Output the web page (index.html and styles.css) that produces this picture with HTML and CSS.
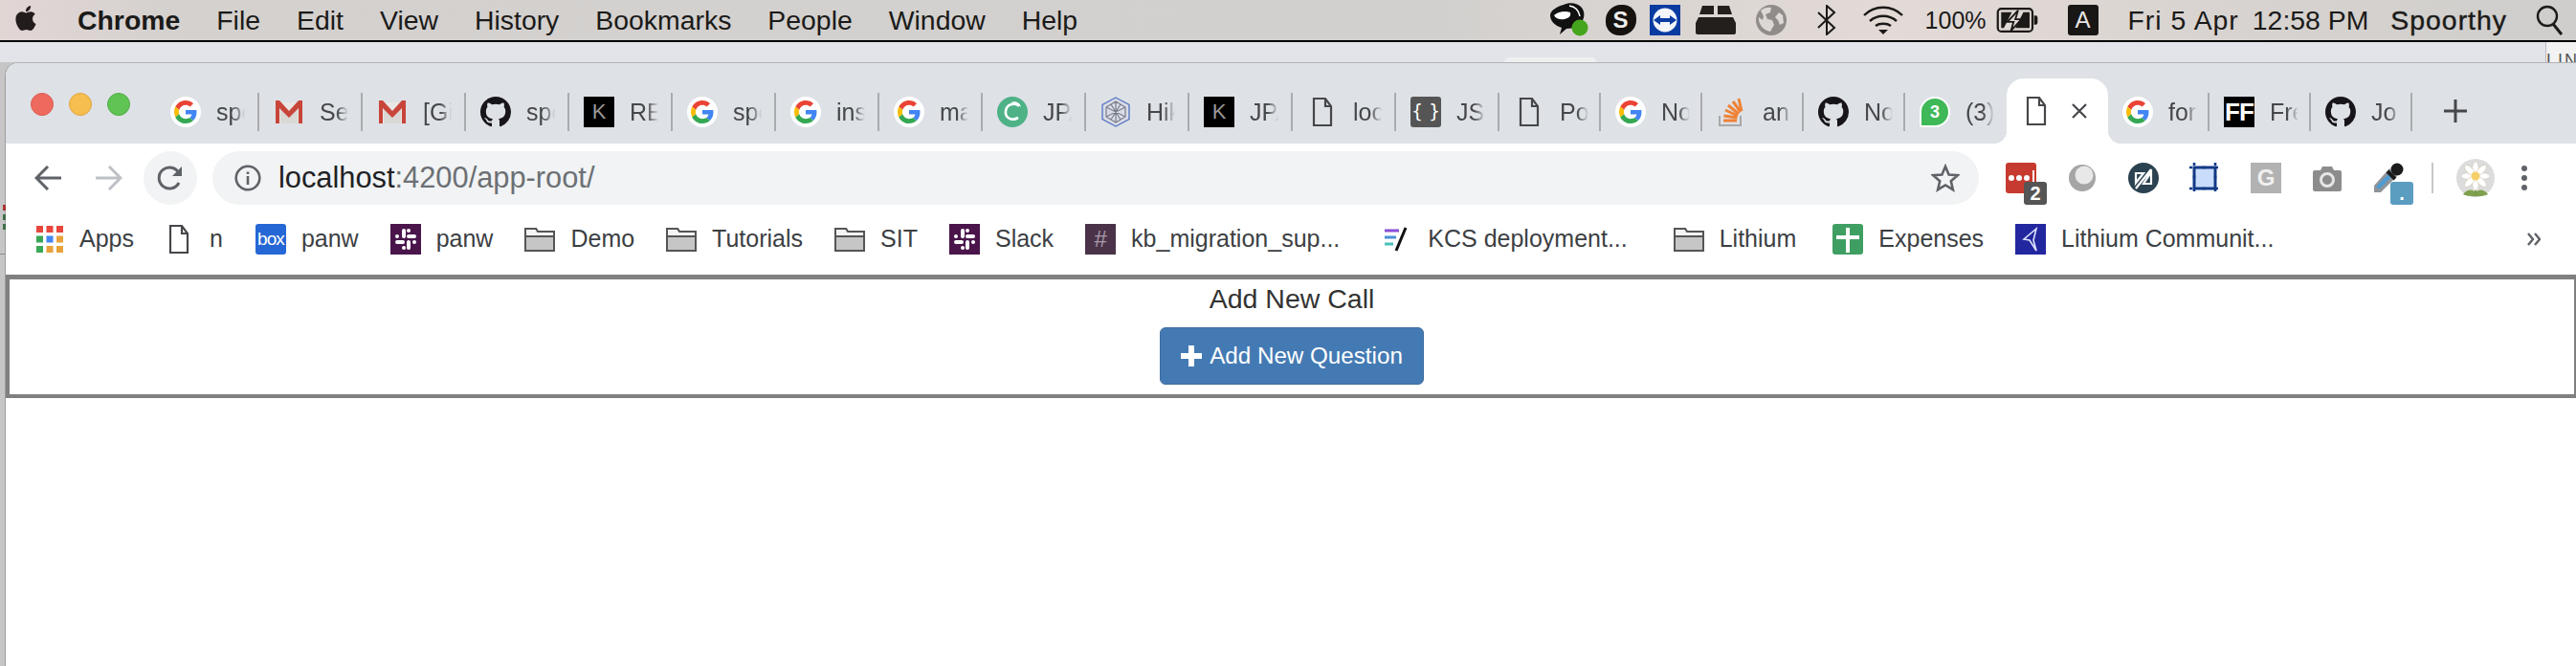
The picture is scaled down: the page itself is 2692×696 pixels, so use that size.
FILE: index.html
```html
<!DOCTYPE html>
<html>
<head lang="en">
    <meta charset="UTF-8">
    <title>Add New Call</title>
    <link rel="stylesheet" href="styles.css">
</head>
<body>
<svg class="defs" width="0" height="0">
    <symbol id="i-google" viewBox="-8 -8 64 64">
        <circle cx="24" cy="24" r="32" fill="#fff"/>
        <path fill="#EA4335" d="M24 9.5c3.54 0 6.71 1.22 9.21 3.6l6.85-6.85C35.9 2.38 30.47 0 24 0 14.62 0 6.51 5.38 2.56 13.22l7.98 6.19C12.43 13.72 17.74 9.5 24 9.5z"/>
        <path fill="#4285F4" d="M46.98 24.55c0-1.57-.15-3.09-.38-4.55H24v9.02h12.94c-.58 2.96-2.26 5.48-4.78 7.18l7.73 6c4.51-4.18 7.09-10.36 7.09-17.65z"/>
        <path fill="#FBBC05" d="M10.53 28.59c-.48-1.45-.76-2.99-.76-4.59s.27-3.14.76-4.59l-7.98-6.19C.92 16.46 0 20.12 0 24c0 3.88.92 7.54 2.56 10.78l7.97-6.19z"/>
        <path fill="#34A853" d="M24 48c6.48 0 11.93-2.13 15.89-5.81l-7.73-6c-2.15 1.45-4.92 2.3-8.16 2.3-6.26 0-11.57-4.22-13.47-9.91l-7.98 6.19C6.51 42.62 14.62 48 24 48z"/>
    </symbol>
    <symbol id="i-gmail" viewBox="0 0 32 32">
        <path fill="#e9e7e4" d="M3 6h26v22H3z"/>
        <path fill="#dad8d5" d="M7 9l9 9 9-9v19H7z"/>
        <path fill="#c8453a" d="M2 4h4l10 11L26 4h4v24h-4V12l-10 10L6 12v16H2z"/>
    </symbol>
    <symbol id="i-github" viewBox="0 0 16 16">
        <path fill="#17151a" d="M8 0C3.58 0 0 3.58 0 8c0 3.54 2.29 6.53 5.47 7.59.4.07.55-.17.55-.38 0-.19-.01-.82-.01-1.49-2.01.37-2.53-.49-2.69-.94-.09-.23-.48-.94-.82-1.13-.28-.15-.68-.52-.01-.53.63-.01 1.08.58 1.23.82.72 1.21 1.87.87 2.33.66.07-.52.28-.87.51-1.07-1.78-.2-3.64-.89-3.64-3.95 0-.87.31-1.59.82-2.15-.08-.2-.36-1.02.08-2.12 0 0 .67-.21 2.2.82.64-.18 1.32-.27 2-.27.68 0 1.36.09 2 .27 1.53-1.04 2.2-.82 2.2-.82.44 1.1.16 1.92.08 2.12.51.56.82 1.27.82 2.15 0 3.07-1.87 3.75-3.65 3.95.29.25.54.73.54 1.48 0 1.07-.01 1.93-.01 2.2 0 .21.15.46.55.38A8.013 8.013 0 0016 8c0-4.42-3.58-8-8-8z"/>
    </symbol>
    <symbol id="i-doc" viewBox="0 0 32 32">
        <path fill="none" stroke="#45474a" stroke-width="2.2" d="M7 2h12l6 8v20H7zM19 2v8h6"/>
    </symbol>
    <symbol id="i-folder" viewBox="0 0 32 32">
        <path fill="#c6c6c6" stroke="#555" stroke-width="2" d="M1 28V5h11l2 3h17v20z"/>
        <path fill="#f4f4f4" stroke="#555" stroke-width="2" d="M1 5h11l2 3h17v5H1z"/>
    </symbol>
    <symbol id="i-slack" viewBox="0 0 32 32">
        <path fill="#4a154b" d="M0 0h32v32H0z"/>
        <g fill="#fff">
            <rect x="12" y="5" width="4" height="10" rx="2"/>
            <rect x="17" y="17" width="4" height="10" rx="2"/>
            <rect x="5" y="17" width="10" height="4" rx="2"/>
            <rect x="17" y="11" width="10" height="4" rx="2"/>
            <circle cx="19" cy="7" r="2"/>
            <circle cx="14" cy="25" r="2"/>
            <circle cx="7" cy="13" r="2"/>
            <circle cx="25" cy="19" r="2"/>
        </g>
    </symbol>
</svg>

<header class="menubar">
    <svg class="apple" viewBox="2 1 20 22"><path fill="#231c1c" d="M18.71 19.5c-.83 1.24-1.71 2.45-3.05 2.47-1.34.03-1.77-.79-3.29-.79-1.53 0-2 .77-3.27.82-1.31.05-2.3-1.32-3.14-2.53C4.25 17 2.94 12.45 4.7 9.39c.87-1.52 2.43-2.48 4.12-2.51 1.28-.02 2.5.87 3.29.87.78 0 2.26-1.07 3.81-.91.65.03 2.47.26 3.64 1.98-.09.06-2.17 1.28-2.15 3.81.03 3.02 2.65 4.03 2.68 4.04-.03.07-.42 1.44-1.38 2.83M13 3.5c.73-.83 1.94-1.46 2.94-1.5.13 1.17-.34 2.35-1.04 3.19-.69.85-1.83 1.51-2.95 1.42-.15-1.15.41-2.35 1.05-3.11z"/></svg>
    <nav class="menu">
        <b>Chrome</b>
        <span>File</span>
        <span>Edit</span>
        <span>View</span>
        <span>History</span>
        <span>Bookmarks</span>
        <span>People</span>
        <span>Window</span>
        <span>Help</span>
    </nav>
    <div class="status">
        <svg class="st-chat" viewBox="0 0 40 36">
            <path fill="#111" d="M14 2c6-3 15-2 19 3 3 4 3 9 1 13-3 6-10 9-17 9l-7 6 2-7C5 24 0 19 0 13 0 8 7 4 14 2z"/>
            <path fill="#fff" d="M4 13c4-4 12-5 17-3 1 4-2 6-6 7-4 1-9 0-11-4z"/>
            <path fill="none" stroke="#fff" stroke-width="1.500" d="M20 3c6 1 10 5 11 11"/>
            <circle cx="31" cy="26" r="8.500" fill="#45a51c"/>
        </svg>
        <span class="st-skype">S</span>
        <svg class="st-tv" viewBox="0 0 32 32">
            <path fill="#0a3ba1" d="M0 0h32v32H0z"/>
            <circle cx="16" cy="16" r="12.5" fill="#f3f5fa"/>
            <path fill="#0a3ba1" d="M4 16l7-5v3h10v-3l7 5-7 5v-3H11v3z"/>
        </svg>
        <svg class="st-drive" viewBox="0 0 42 30">
            <path fill="#231f1c" d="M7 0h12v9H4zM23 0h12l3 9H23zM3 12h36l3 6v10a2 2 0 0 1-2 2H2a2 2 0 0 1-2-2V18z"/>
        </svg>
        <svg class="st-globe" viewBox="0 0 32 32">
            <circle cx="16" cy="16" r="16" fill="#8f8c8a"/>
            <path fill="#dcd8d5" d="M5 6c3-3 8-4 11-3l-1 5-5 2 2 5 5 1 2 5-4 7C8 27 2 20 3 13l4 3 1-4zM24 8l4 3 1 8-4 2-2-5-3-3z"/>
        </svg>
        <svg class="st-bt" viewBox="0 0 20 32"><path fill="none" stroke="#1c1a18" stroke-width="2" d="M1 8l17 16-8 7V1l8 7L1 24"/></svg>
        <svg class="st-wifi" viewBox="0 0 42 30">
            <path fill="none" stroke="#1c1a18" stroke-width="2.4" d="M1 10c11-11 29-11 40 0M7 16c8-7 20-7 28 0M13 21c4-3 12-3 16 0"/>
            <path fill="#1c1a18" d="M16 25h10l-5 5z"/>
        </svg>
        <span class="st-pct">100%</span>
        <svg class="st-batt" viewBox="0 0 46 28">
            <rect x="1.2" y="1.2" width="39" height="25.6" rx="4" fill="none" stroke="#1c1a18" stroke-width="2.4"/>
            <path fill="#1c1a18" d="M42 9h2a2 2 0 0 1 2 2v6a2 2 0 0 1-2 2h-2zM5 5h12l-9 18H5zM30 5h7v18H21z"/>
            <path fill="none" stroke="#1c1a18" stroke-width="2" d="M24 3l-3 10h7L16 26l3-10h-7z"/>
        </svg>
        <span class="st-key">A</span>
        <span class="st-date">Fri 5 Apr</span>
        <span class="st-time">12:58 PM</span>
        <span class="st-user">Spoorthy</span>
        <svg class="st-search" viewBox="0 0 30 32"><circle cx="12" cy="12" r="10" fill="none" stroke="#1c1a18" stroke-width="2.4"/><path stroke="#1c1a18" stroke-width="3" d="M18 20l9 11"/></svg>
    </div>
</header>

<div class="desk">
    <div class="back-tab"></div>
    <div class="back-corner"><span>LIN</span></div>
    <div class="wall-line"></div>
    <div class="wall-mark red"></div>
    <div class="wall-mark green one"></div>
    <div class="wall-mark green two"></div>

    <div class="window">
        <div class="tabstrip">
            <div class="lights"><i class="red"></i><i class="yellow"></i><i class="green"></i></div>
            <div class="tab"><svg class="fav"><use href="#i-google"/></svg><span class="label">spo</span></div>
            <div class="tab"><svg class="fav"><use href="#i-gmail"/></svg><span class="label">Se</span></div>
            <div class="tab"><svg class="fav"><use href="#i-gmail"/></svg><span class="label">[Gi</span></div>
            <div class="tab"><svg class="fav"><use href="#i-github"/></svg><span class="label">spo</span></div>
            <div class="tab"><span class="fav fav-k">K</span><span class="label">RE</span></div>
            <div class="tab"><svg class="fav"><use href="#i-google"/></svg><span class="label">spo</span></div>
            <div class="tab"><svg class="fav"><use href="#i-google"/></svg><span class="label">ins</span></div>
            <div class="tab"><svg class="fav"><use href="#i-google"/></svg><span class="label">ma</span></div>
            <div class="tab">
                <svg class="fav" viewBox="0 0 32 32">
                    <circle cx="16" cy="16" r="16" fill="#4fb287"/>
                    <path fill="none" stroke="#fff" stroke-width="2.6" d="M23 10c-3-4-13-3-14 5-1 7 6 11 13 7"/>
                    <path fill="#fff" d="M14 6c5-2 10 0 11 5-3-3-7-4-11-5z"/>
                </svg>
                <span class="label">JPA</span>
            </div>
            <div class="tab">
                <svg class="fav" viewBox="0 0 32 32">
                    <path fill="#d9dce6" stroke="#5a78c4" stroke-width="1.4" d="M16 1l14 7.500v15L16 31 2 23.500v-15z"/>
                    <path fill="none" stroke="#7a7f8c" stroke-width="1.2" d="M16 5l10 6v10l-10 6-10-6V11zM6 11l20 10M26 11L6 21M16 5v22M11 8l10 16M21 8L11 24"/>
                </svg>
                <span class="label">Hik</span>
            </div>
            <div class="tab"><span class="fav fav-k">K</span><span class="label">JPA</span></div>
            <div class="tab"><svg class="fav"><use href="#i-doc"/></svg><span class="label">loc</span></div>
            <div class="tab"><span class="fav fav-json">{ }</span><span class="label">JS</span></div>
            <div class="tab tab-sm"><svg class="fav"><use href="#i-doc"/></svg><span class="label">Po</span></div>
            <div class="tab tab-sm"><svg class="fav"><use href="#i-google"/></svg><span class="label">No</span></div>
            <div class="tab tab-sm">
                <svg class="fav" viewBox="0 0 32 32">
                    <path fill="none" stroke="#a8a8a8" stroke-width="2" d="M3 20v10h22V20"/>
                    <path fill="none" stroke="#ef8236" stroke-width="3" d="M7 25h14M7.500 20l14 2M9 14l13 6M12 9l11 9M17 5l8 11M23 2l3 13"/>
                </svg>
                <span class="label">an</span>
            </div>
            <div class="tab tab-sm"><svg class="fav"><use href="#i-github"/></svg><span class="label">No</span></div>
            <div class="tab tab-sm tab-before-active">
                <span class="fav fav-wa">3</span><span class="label">(3)</span>
            </div>
            <div class="tab tab-sm tab-active">
                <svg class="fav"><use href="#i-doc"/></svg>
                <svg class="close" viewBox="0 0 18 18"><path stroke="#45474a" stroke-width="2.2" d="M2 2l14 14M16 2L2 16"/></svg>
            </div>
            <div class="tab tab-sm"><svg class="fav"><use href="#i-google"/></svg><span class="label">for</span></div>
            <div class="tab tab-sm"><span class="fav fav-ff">FF</span><span class="label">Fre</span></div>
            <div class="tab tab-sm"><svg class="fav"><use href="#i-github"/></svg><span class="label">Jo</span></div>
            <svg class="newtab" viewBox="0 0 24 24"><path fill="#45474a" d="M10.500 0h3v10.500H24v3H13.500V24h-3V13.500H0v-3h10.500z"/></svg>
        </div>

        <div class="toolbar">
            <svg class="nav-arrow" viewBox="0 0 28 26"><path fill="none" stroke="#5f6368" stroke-width="3" d="M28 13H3M14 1L2 13l12 12"/></svg>
            <svg class="nav-arrow off" viewBox="0 0 28 26"><path fill="none" stroke="#bdc1c6" stroke-width="3" d="M0 13h25M14 1l12 12-12 12"/></svg>
            <div class="reload">
                <svg viewBox="0 0 28 28"><path fill="none" stroke="#5f6368" stroke-width="3" d="M23 19a11 11 0 1 1 0-10"/><path fill="#5f6368" d="M26 2v10H16z"/></svg>
            </div>
            <div class="omnibox">
                <svg class="info" viewBox="0 0 28 28"><circle cx="14" cy="14" r="12.300" fill="none" stroke="#5f6368" stroke-width="2.600"/><path fill="#5f6368" d="M12.700 12h2.600v9h-2.600zM12.700 7.500h2.600v2.600h-2.600z"/></svg>
                <span class="url"><em>localhost</em>:4200/app-root/</span>
                <svg class="star" viewBox="0 0 30 30"><path fill="none" stroke="#5f6368" stroke-width="2.600" d="M15 3l3.600 8.500 9.200.7-7 6 2.100 9L15 22.400 7.100 27.200l2.100-9-7-6 9.200-.7z"/></svg>
            </div>
            <div class="extensions">
                <div class="ext">
                    <svg viewBox="0 0 32 32"><rect width="32" height="32" rx="3" fill="#c73a2f"/><circle cx="6" cy="16" r="3" fill="#fff"/><circle cx="14" cy="16" r="3" fill="#fff"/><circle cx="22" cy="16" r="3" fill="#fff"/><path fill="#fff" d="M28 8h2v16h-2z"/></svg>
                    <span class="ext-badge dark">2</span>
                </div>
                <div class="ext">
                    <svg viewBox="0 0 32 32"><circle cx="16" cy="16" r="14" fill="#a5a5a5"/><circle cx="18" cy="13" r="9.500" fill="#e8e8e8"/></svg>
                </div>
                <div class="ext">
                    <svg viewBox="0 0 32 32"><circle cx="16" cy="16" r="16" fill="#2b4250"/><path fill="none" stroke="#fff" stroke-width="2.200" d="M8 11l8 0-8 10zM24 22h-8l8-12zM24 7L8 27"/></svg>
                </div>
                <div class="ext">
                    <svg viewBox="0 0 32 32"><rect x="5" y="5" width="22" height="22" fill="#c9dcfb" stroke="#123a86" stroke-width="3"/><path stroke="#123a86" stroke-width="2.600" stroke-dasharray="3 10.500" d="M5 0v32M27 0v32M0 5h32M0 27h32"/></svg>
                </div>
                <div class="ext"><span class="ext-g">G</span></div>
                <div class="ext">
                    <svg viewBox="0 0 32 32"><path fill="#8c8c8c" d="M3 8h6l2-4h10l2 4h6a2 2 0 0 1 2 2v18a2 2 0 0 1-2 2H3a2 2 0 0 1-2-2V10a2 2 0 0 1 2-2z"/><circle cx="16" cy="18" r="6.500" fill="none" stroke="#e6e6e6" stroke-width="3"/></svg>
                </div>
                <div class="ext">
                    <svg viewBox="0 0 32 32"><path fill="#8e9499" d="M17 6l8 8L8 31H1v-7z"/><path fill="#4d9cd3" d="M17 11l3 3L7 27H4v-3z"/><circle cx="25" cy="7" r="6.500" fill="#1c1c1c"/><path stroke="#1c1c1c" stroke-width="4" d="M15 9l8 8"/></svg>
                    <span class="ext-badge blue">.</span>
                </div>
                <div class="ext-sep"></div>
                <div class="avatar">
                    <svg viewBox="0 0 40 40">
                        <circle cx="20" cy="20" r="20" fill="#dcdcdc"/>
                        <path fill="#7fa14e" d="M7 37c5-6 10-5 13-2 3-3 8-4 13 2-4 3-22 3-26 0z"/>
                        <path stroke="#6c9a44" stroke-width="2" d="M20 24v13"/>
                        <g fill="#fff" stroke="#cfc8b6" stroke-width=".6">
                            <ellipse cx="20" cy="10" rx="3.200" ry="7"/>
                            <ellipse cx="20" cy="26" rx="3.200" ry="7"/>
                            <ellipse cx="12" cy="18" rx="7" ry="3.200"/>
                            <ellipse cx="28" cy="18" rx="7" ry="3.200"/>
                            <ellipse cx="14" cy="12" rx="3.200" ry="7" transform="rotate(-45 14 12)"/>
                            <ellipse cx="26" cy="12" rx="3.200" ry="7" transform="rotate(45 26 12)"/>
                            <ellipse cx="14" cy="24" rx="3.200" ry="7" transform="rotate(45 14 24)"/>
                            <ellipse cx="26" cy="24" rx="3.200" ry="7" transform="rotate(-45 26 24)"/>
                        </g>
                        <circle cx="20" cy="18" r="4.500" fill="#f5cf6a"/>
                    </svg>
                </div>
                <div class="dots"><i></i><i></i><i></i></div>
            </div>
        </div>

        <div class="bookmarks">
            <div class="bm bm-apps">
                <svg class="bm-icon" viewBox="0 0 28 28">
                    <path fill="#e8453c" d="M0 0h7v7H0zM10.500 0h7v7h-7zM21 0h7v7h-7z"/>
                    <path fill="#3aa757" d="M0 10.500h7v7H0zM0 21h7v7H0z"/>
                    <path fill="#4285f4" d="M10.500 10.500h7v7h-7z"/>
                    <path fill="#e9a23b" d="M21 10.500h7v7h-7zM10.500 21h7v7h-7zM21 21h7v7h-7z"/>
                </svg>
                Apps
            </div>
            <div class="bm bm-n"><svg class="bm-icon doc-icon"><use href="#i-doc"/></svg>n</div>
            <div class="bm"><span class="bm-icon fav-box">box</span>panw</div>
            <div class="bm"><svg class="bm-icon"><use href="#i-slack"/></svg>panw</div>
            <div class="bm"><svg class="bm-icon"><use href="#i-folder"/></svg>Demo</div>
            <div class="bm"><svg class="bm-icon"><use href="#i-folder"/></svg>Tutorials</div>
            <div class="bm"><svg class="bm-icon"><use href="#i-folder"/></svg>SIT</div>
            <div class="bm"><svg class="bm-icon"><use href="#i-slack"/></svg>Slack</div>
            <div class="bm"><span class="bm-icon fav-hash">#</span>kb_migration_sup...</div>
            <div class="bm bm-kcs">
                <svg class="bm-icon" viewBox="0 0 32 32">
                    <path stroke="#8a4fd6" stroke-width="3" d="M3 7h15"/>
                    <path stroke="#4a90d9" stroke-width="3" d="M3 14h12"/>
                    <path stroke="#48c2b9" stroke-width="3" d="M3 21h9"/>
                    <path stroke="#111" stroke-width="3" d="M25 4L15 28"/>
                </svg>
                KCS deployment...
            </div>
            <div class="bm bm-lithium"><svg class="bm-icon"><use href="#i-folder"/></svg>Lithium</div>
            <div class="bm">
                <svg class="bm-icon" viewBox="0 0 32 32"><rect width="32" height="32" rx="3" fill="#3f9f63"/><path fill="#fff" d="M14 4h4v8h10v4H18v14h-4V16H4v-4h10z"/></svg>
                Expenses
            </div>
            <div class="bm">
                <svg class="bm-icon" viewBox="0 0 32 32"><path fill="#23279f" d="M0 0h32v32H0z"/><path fill="none" stroke="#dfe3ff" stroke-width="1.600" d="M22 5L9 16l6 1 7 11-3-11z"/></svg>
                Lithium Communit...
            </div>
            <svg class="more" viewBox="0 0 14 16"><path fill="none" stroke="#5f6368" stroke-width="2.400" d="M1 2l5 6-5 6M8 2l5 6-5 6"/></svg>
        </div>

        <div class="call-box">
            <div class="call-title">Add New Call</div>
            <button class="add-btn">
                <svg class="plus" viewBox="0 0 22 22"><path fill="#fff" d="M8 0h6v8h8v6h-8v8H8v-8H0V8h8z"/></svg>
                Add New Question
            </button>
        </div>
    </div>
</div>
</body>
</html>
```
FILE: styles.css
```css
* {
    margin: 0;
    padding: 0;
    box-sizing: border-box;
}
html, body {
    width: 2692px;
    height: 696px;
    overflow: hidden;
    background: #fff;
    font-family: "Liberation Sans", Arial, sans-serif;
}
svg {
    display: block;
    flex: none;
}
.defs {
    position: absolute;
}

/* mac menu bar */
.menubar {
    display: flex;
    align-items: center;
    height: 44px;
    border-bottom: 2px solid #000;
    padding-left: 14px;
    padding-right: 12px;
    background: linear-gradient(to right, #e2d6d5 0, #d4d1cf 180px, #d2d0ce 1500px, #e3dad6 1980px, #d6d2cf 2400px, #cfcecc 2692px);
    color: #1b1a18;
    font-size: 28.4px;
}
.apple {
    width: 26px;
    height: 32px;
    margin-top: -4px;
}
.menu {
    display: flex;
    gap: 38px;
    margin-left: 41px;
}
.status {
    display: flex;
    align-items: center;
    margin-left: auto;
}
.st-chat { width: 40px; height: 36px; }
.st-skype {
    width: 32px;
    height: 32px;
    margin-left: 18px;
    border-radius: 50% 44%;
    background: #16130f;
    color: #eee;
    font-weight: bold;
    font-size: 24px;
    line-height: 32px;
    text-align: center;
}
.st-tv { width: 32px; height: 32px; margin-left: 14px; }
.st-drive { width: 42px; height: 30px; margin-left: 16px; }
.st-globe { width: 32px; height: 32px; margin-left: 21px; }
.st-bt { width: 20px; height: 32px; margin-left: 32px; }
.st-wifi { width: 42px; height: 30px; margin-left: 28px; }
.st-pct { margin-left: 23px; font-size: 25px; }
.st-batt { width: 46px; height: 26px; margin-left: 9px; }
.st-key {
    width: 32px;
    height: 32px;
    margin-left: 30px;
    border-radius: 3px;
    background: #191715;
    color: #e8e6e4;
    font-size: 24px;
    line-height: 32px;
    text-align: center;
}
.st-date { margin-left: 31px; letter-spacing: 1px; }
.st-time { margin-left: 14px; }
.st-user { margin-left: 23px; letter-spacing: 1px; -webkit-text-stroke: .4px #1b1a18; }
.st-search { width: 30px; height: 32px; margin-left: 30px; }

/* what lies behind the chrome window */
.desk {
    position: relative;
    display: flex;
    height: 652px;
    padding-top: 21px;
    padding-left: 5px;
    background: linear-gradient(#e3e5ea 0, #e1e3e8 21px, #c6c6c6 21px);
}
.back-tab {
    position: absolute;
    left: 1572px;
    top: 16px;
    width: 96px;
    height: 5px;
    border-radius: 8px 8px 0 0;
    background: #eeeff0;
}
.back-corner {
    position: absolute;
    right: 0;
    top: 0;
    width: 32px;
    height: 21px;
    overflow: hidden;
    border-left: 1px solid #b9bbbf;
    background: #f2f2f2;
    font-size: 18px;
    line-height: 20px;
    letter-spacing: 2px;
    color: #555;
    padding-top: 9px;
}
.wall-line {
    position: absolute;
    left: 0;
    top: 221px;
    width: 5px;
    height: 1px;
    background: #8a8a8a;
}
.wall-mark {
    position: absolute;
    left: 3px;
    width: 3px;
    height: 6px;
}
.wall-mark.red { top: 170px; background: #a8332d; }
.wall-mark.one { top: 180px; background: #3f6e48; }
.wall-mark.two { top: 190px; background: #3f6e48; }

.window {
    flex: 1;
    overflow: hidden;
    border-left: 1px solid #9d9d9d;
    border-top: 1px solid #b1b2b5;
    border-top-left-radius: 14px;
    background: #fff;
}

/* tabs */
.tabstrip {
    display: flex;
    align-items: flex-start;
    height: 84px;
    padding-top: 31px;
    padding-left: 26px;
    background: #dee1e6;
}
.lights {
    display: flex;
    gap: 16px;
    margin-right: 27px;
}
.lights i {
    width: 24px;
    height: 24px;
    border-radius: 50%;
}
.lights .red { background: #ee6a5f; border: 1px solid #dd5b50; }
.lights .yellow { background: #f6be4f; border: 1px solid #e0a63f; }
.lights .green { background: #5fc454; border: 1px solid #52ab47; }
.tab {
    display: flex;
    align-items: center;
    gap: 16px;
    width: 108px;
    height: 40px;
    padding-left: 15px;
    border-right: 2px solid #a9abaf;
    color: #45474a;
    font-size: 25px;
}
.tab-sm {
    width: 106px;
}
.tab-before-active {
    border-right: 0;
}
.tab-active {
    position: relative;
    height: 68px;
    margin-top: -15px;
    padding-left: 15px;
    gap: 20px;
    border-right: 0;
    border-radius: 18px 18px 0 0;
    background: #fff;
}
.tab-active::before,
.tab-active::after {
    content: "";
    position: absolute;
    bottom: 0;
    width: 14px;
    height: 14px;
}
.tab-active::before {
    left: -14px;
    background: radial-gradient(circle at 0 0, #dee1e6 14px, #fff 14.500px);
}
.tab-active::after {
    right: -14px;
    background: radial-gradient(circle at 100% 0, #dee1e6 14px, #fff 14.500px);
}
.fav {
    flex: none;
    width: 32px;
    height: 32px;
}
.fav-k {
    background: #000;
    color: #999;
    font-size: 22px;
    line-height: 32px;
    text-align: center;
}
.fav-json {
    border-radius: 3px;
    background: #555;
    color: #fff;
    font-family: "DejaVu Sans", sans-serif;
    font-size: 19px;
    line-height: 30px;
    text-align: center;
}
.fav-wa {
    border-radius: 50% 50% 50% 8%;
    border: 2px solid #fff;
    background: #3fb858;
    color: #fff;
    font-weight: bold;
    font-size: 18px;
    line-height: 28px;
    text-align: center;
}
.fav-ff {
    background: #000;
    color: #fff;
    font-weight: bold;
    font-size: 26px;
    line-height: 32px;
    text-align: center;
    letter-spacing: -1px;
}
.label {
    width: 30px;
    overflow: hidden;
    white-space: nowrap;
    -webkit-mask-image: linear-gradient(to right, #000 60%, transparent);
    mask-image: linear-gradient(to right, #000 60%, transparent);
}
.close {
    width: 18px;
    height: 18px;
}
.newtab {
    width: 24px;
    height: 24px;
    margin-left: 33px;
    margin-top: 7px;
}

/* address row */
.toolbar {
    display: flex;
    align-items: center;
    height: 64px;
    padding-top: 8px;
    padding-left: 30px;
}
.nav-arrow {
    width: 28px;
    height: 26px;
    margin-right: 36px;
}
.nav-arrow.off {
    margin-right: 22px;
}
.reload {
    display: flex;
    align-items: center;
    justify-content: center;
    width: 56px;
    height: 56px;
    border-radius: 50%;
    background: #f1f3f4;
}
.reload svg {
    width: 28px;
    height: 28px;
}
.omnibox {
    display: flex;
    align-items: center;
    width: 1846px;
    height: 56px;
    margin-left: 16px;
    padding: 0 20px 0 23px;
    border-radius: 28px;
    background: #f1f3f4;
}
.info {
    width: 28px;
    height: 28px;
}
.url {
    margin-left: 18px;
    font-size: 30.8px;
    color: #6c7075;
}
.url em {
    font-style: normal;
    color: #202124;
}
.star {
    width: 30px;
    height: 30px;
    margin-left: auto;
}
.extensions {
    display: flex;
    align-items: center;
    gap: 32px;
    margin-left: 28px;
}
.ext {
    position: relative;
    width: 32px;
    height: 32px;
}
.ext svg {
    width: 32px;
    height: 32px;
}
.ext-badge {
    position: absolute;
    left: 19px;
    top: 20px;
    width: 24px;
    height: 24px;
    border-radius: 3px;
    color: #fff;
    font-weight: bold;
    font-size: 20px;
    line-height: 24px;
    text-align: center;
}
.ext-badge.dark { background: #555; }
.ext-badge.blue { left: 18px; background: #5a9dc0; }
.ext-g {
    display: block;
    width: 32px;
    height: 32px;
    background: #b2b2b2;
    color: #f0f0f0;
    font-weight: bold;
    font-size: 24px;
    line-height: 32px;
    text-align: center;
}
.ext-sep {
    width: 2px;
    height: 32px;
    margin-left: -3px;
    background: #c6c8cb;
}
.avatar {
    width: 40px;
    height: 40px;
    margin-left: -8px;
}
.avatar svg {
    width: 40px;
    height: 40px;
}
.dots {
    display: flex;
    flex-direction: column;
    gap: 4px;
    margin-left: -4px;
}
.dots i {
    width: 6px;
    height: 6px;
    border-radius: 50%;
    background: #5f6368;
}

/* bookmarks */
.bookmarks {
    display: flex;
    align-items: center;
    gap: 33px;
    height: 73px;
    padding-left: 32px;
    padding-bottom: 2px;
    font-size: 25px;
    color: #3c4043;
}
.bm {
    display: flex;
    align-items: center;
    gap: 16px;
    white-space: nowrap;
}
.bm-icon {
    display: block;
    flex: none;
    width: 32px;
    height: 32px;
}
.bm-apps {
    gap: 17px;
}
.bm-apps .bm-icon {
    width: 28px;
    height: 28px;
}
.bm-n {
    margin-right: 1px;
}
.doc-icon {
    margin-left: -2px;
}
.fav-box {
    border-radius: 3px;
    background: #2567d5;
    color: #fff;
    font-size: 19px;
    letter-spacing: -1px;
    line-height: 32px;
    text-align: center;
}
.fav-hash {
    background: #4a3348;
    color: #a99aa8;
    font-size: 24px;
    line-height: 32px;
    text-align: center;
}
.bm-kcs {
    margin-left: 11px;
}
.bm-lithium {
    margin-left: 15px;
    margin-right: 5px;
}
.more {
    width: 14px;
    height: 16px;
    margin-left: auto;
    margin-right: 37px;
}

/* the app itself */
.call-box {
    width: 2688px;
    height: 129px;
    border: 4px solid #808080;
    border-top-width: 5px;
    text-align: center;
}
.call-title {
    height: 50px;
    padding-top: 2px;
    font-size: 28.5px;
    line-height: 36px;
    color: #333;
}
.add-btn {
    display: inline-flex;
    align-items: center;
    justify-content: center;
    gap: 8px;
    width: 276px;
    height: 60px;
    border: 1px solid #3f6f9f;
    border-radius: 6px;
    background: #447ab3;
    color: #fff;
    font-family: inherit;
    font-size: 24.2px;
}
.plus {
    width: 22px;
    height: 22px;
}
```
